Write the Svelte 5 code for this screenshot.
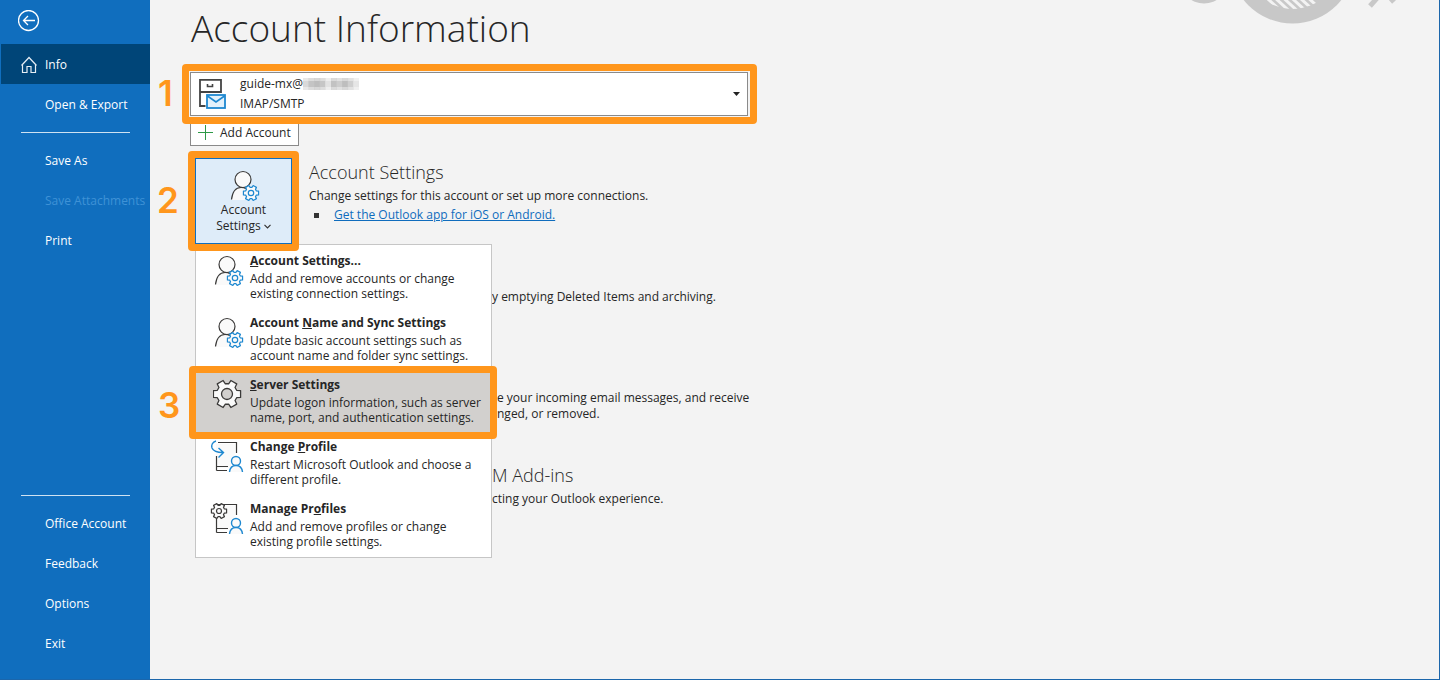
<script lang="ts">
  const topNav = [{ label: 'Save As' }, { label: 'Save Attachments', disabled: true }, { label: 'Print' }];
  const bottomNav = ['Office Account', 'Feedback', 'Options', 'Exit'];
  const menu = [
    { icon: 'user', pre: '', key: 'A', post: 'ccount Settings...', lines: ['Add and remove accounts or change', 'existing connection settings.'] },
    { icon: 'user', pre: 'Account ', key: 'N', post: 'ame and Sync Settings', lines: ['Update basic account settings such as', 'account name and folder sync settings.'] },
    { icon: 'gear', pre: '', key: 'S', post: 'erver Settings', lines: ['Update logon information, such as server', 'name, port, and authentication settings.'], step: 3 },
    { icon: 'change', pre: 'Change ', key: 'P', post: 'rofile', lines: ['Restart Microsoft Outlook and choose a', 'different profile.'] },
    { icon: 'manage', pre: 'Manage Pr', key: 'o', post: 'files', lines: ['Add and remove profiles or change', 'existing profile settings.'] }
  ];
  const mosaic = ['#d9d9d9', '#c4c4c4', '#bdbdbd', '#c6c6c6', '#e2e2e2', '#c2c2c2', '#cdcdcd', '#bebebe', '#cfcfcf', '#e6e6e6'];

  // Outline of a six-toothed cog centred on (cx, cy) with outer radius r.
  function cog(cx: number, cy: number, r: number): string {
    const pts: string[] = [];
    const root = r * 0.74;
    for (let i = 0; i < 6; i++) {
      const a = i * 60;
      for (const [da, rad] of [[-21, root], [-14, r], [14, r], [21, root]]) {
        const t = ((a + da) * Math.PI) / 180;
        pts.push(`${(cx + rad * Math.cos(t)).toFixed(2)},${(cy + rad * Math.sin(t)).toFixed(2)}`);
      }
    }
    return pts.join(' ');
  }
</script>

{#snippet userGear()}
  <svg width="32" height="32" viewBox="0 0 32 32" fill="none" aria-hidden="true">
    <path d="M3 30C4 20 8 17 13 17c4 0 6 1 7 3v10z" fill="#fafafa" />
    <circle cx="14" cy="9.500" r="8" fill="#fafafa" stroke="#3b3a39" stroke-width="1.200" />
    <path d="M2.500 29.500C3.500 21 7.500 17.500 12 17.500c2 0 3.500 .3 5 1.200" stroke="#3b3a39" stroke-width="1.200" />
    <polygon points={cog(22, 23, 7.8)} fill="#fafafa" stroke="#1e88d0" stroke-width="1.200" stroke-linejoin="round" />
    <circle cx="22" cy="23" r="2.700" stroke="#1e88d0" stroke-width="1.200" />
  </svg>
{/snippet}

{#snippet profileBook()}
  <path d="M6 5H25V17l-5 12H6z" fill="#fafafa" />
  <path d="M8 3.500H26.500V14M6.500 17V30.500M6.500 27.500H18M6.500 31.500H17M6.500 27v4.500" stroke="#3b3a39" stroke-width="1.200" />
  <circle cx="26" cy="22" r="4.500" fill="#fafafa" stroke="#1e88d0" stroke-width="1.400" />
  <path d="M19.500 33C20 28.500 22.500 26.500 26 26.500s6 2 6.500 6.500" fill="#fafafa" stroke="#1e88d0" stroke-width="1.400" />
{/snippet}

<div class="app">
  <nav class="side" aria-label="File">
    <button class="back" aria-label="Back">
      <svg width="22" height="22" viewBox="0 0 22 22" fill="none" stroke="#fff" stroke-width="1.300" aria-hidden="true">
        <circle cx="10.500" cy="10.500" r="10" />
        <path d="M17 10.500H5.500M10 6L5.500 10.500l4.500 4.500" />
      </svg>
    </button>
    <a class="item active" href="#info" aria-current="page">
      <svg width="18" height="18" viewBox="0 0 18 18" fill="none" stroke="#e6eef5" stroke-width="1.200" aria-hidden="true">
        <path d="M1.500 9.500L9 1.500l7.500 8M2.500 8.500v8h4.500V10.500h4v6h4.500v-8" />
      </svg>
      Info
    </a>
    <a class="item" href="#open">Open &amp; Export</a>
    <hr />
    {#each topNav as n}
      <button class="item" disabled={n.disabled}>{n.label}</button>
    {/each}
    <div class="bottom">
      <hr />
      {#each bottomNav as n}
        <button class="item">{n}</button>
      {/each}
    </div>
  </nav>

  <main>
    <svg class="art" width="216" height="26" viewBox="0 0 216 26" aria-hidden="true">
      <defs>
        <clipPath id="disc"><circle cx="108.500" cy="-39" r="48" /></clipPath>
      </defs>
      <g fill="#c8c8c8">
        <circle cx="20" cy="-20.500" r="24" />
        <circle cx="108.500" cy="-39" r="62.500" />
      </g>
      <g clip-path="url(#disc)" stroke="#f3f3f3" stroke-width="3">
        {#each [0, 1, 2, 3, 4, 5, 6] as i}
          <line x1={68 + i * 8.3} y1="-8" x2={92 + i * 8.3} y2="14" />
        {/each}
      </g>
      <path d="M186 6l9-10M210 2l-8-9" stroke="#c8c8c8" stroke-width="5" />
    </svg>

    <h1>Account Information</h1>

    <div class="account">
      <label for="acct" class="who">
        guide-mx@<svg width="56" height="12" viewBox="0 0 56 12" aria-hidden="true">
          {#each mosaic as c, i}
            <rect x={i * 5.6} y="0" width="6" height="12" fill={c} opacity="0.600" />
            <rect x={i * 5.6} y="3" width="6" height="6" fill={c} />
          {/each}
        </svg>
      </label>
      <select id="acct"><option>IMAP/SMTP</option></select>
      <svg class="cabinet" width="30" height="32" viewBox="0 0 30 32" fill="none" aria-hidden="true">
        <path d="M2 1.800H23V14H2zM2 14V28H7.500" stroke="#444" stroke-width="1.800" />
        <path d="M9.500 6v2.500h5V6" stroke="#444" stroke-width="1.600" />
        <rect x="9" y="17" width="18" height="13" fill="#e3f1fb" stroke="#1e88d0" stroke-width="1.800" />
        <path d="M9.500 18L18 24l8.500-6" stroke="#1e88d0" stroke-width="1.600" />
      </svg>
      <svg class="arrow" width="7" height="4" viewBox="0 0 7 4" aria-hidden="true"><path d="M0 0h7L3.500 4z" fill="#222" /></svg>
      <span class="frame"></span>
      <span class="num">1</span>
    </div>

    <button class="add">
      <svg width="15" height="15" viewBox="0 0 15 15" stroke="#2e9a47" aria-hidden="true"><path d="M7.500 0v15M0 7.500h15" /></svg>
      Add Account
    </button>

    <div class="body">
      <div class="picker">
        <button class="tile" aria-haspopup="menu" aria-expanded="true">
          {@render userGear()}
          <span>Account</span>
          <span>Settings <svg width="7" height="5" viewBox="0 0 7 5" fill="none" stroke="#333" stroke-width="1.200" aria-hidden="true"><path d="M.5 .8l3 3 3-3" /></svg></span>
        </button>
        <div class="menu" role="menu">
          {#each menu as m}
            <button class="entry" class:hot={m.step} role="menuitem">
              <span class="icon">
                {#if m.icon === 'user'}
                  {@render userGear()}
                {:else if m.icon === 'gear'}
                  <svg width="32" height="32" viewBox="0 0 32 32" fill="none" stroke="#3b3a39" stroke-width="1.300" aria-hidden="true">
                    <polygon points={cog(14, 15, 14)} fill="#fafafa" stroke-linejoin="round" />
                    <circle cx="14" cy="15" r="5.500" fill="#d2d0ce" />
                  </svg>
                {:else}
                  <svg class="wide" width="36" height="36" viewBox="0 0 36 36" fill="none" aria-hidden="true">
                    {@render profileBook()}
                    {#if m.icon === 'change'}
                      <path d="M6 2C2.500 3 1 6 2 9c1 2.500 4 4.500 11 4.500M8.500 9l5 4.500-5 5" stroke="#1e88d0" stroke-width="1.400" />
                    {:else}
                      <polygon points={cog(9, 10, 7.8)} fill="#fafafa" stroke="#3b3a39" stroke-width="1.200" stroke-linejoin="round" />
                      <circle cx="9" cy="10" r="2.500" stroke="#3b3a39" stroke-width="1.200" />
                    {/if}
                  </svg>
                {/if}
              </span>
              <span class="copy">
                <strong>{m.pre}<u>{m.key}</u>{m.post}</strong>
                {#each m.lines as l}<span>{l}</span>{/each}
              </span>
              {#if m.step}
                <span class="frame"></span>
                <span class="num">{m.step}</span>
              {/if}
            </button>
          {/each}
        </div>
        <span class="frame"></span>
        <span class="num">2</span>
      </div>

      <div class="sections">
        <section class="first">
          <h2>Account Settings</h2>
          <p>Change settings for this account or set up more connections.</p>
          <ul><li><a href="#app">Get the Outlook app for iOS or Android.</a></li></ul>
        </section>
        <section class="mailbox"><p>y emptying Deleted Items and archiving.</p></section>
        <section class="rules">
          <p>e your incoming email messages, and receive</p>
          <p>nged, or removed.</p>
        </section>
        <section class="addins">
          <h2>M Add-ins</h2>
          <p>cting your Outlook experience.</p>
        </section>
      </div>
    </div>
  </main>
</div>

<style>
  :global(body) { margin: 0; }
  .app {
    display: grid;
    grid-template-columns: 150px 1fr;
    min-height: 100vh;
    box-sizing: border-box;
    border-right: 1px solid #1b66ab;
    border-bottom: 1px solid #1b66ab;
    background: #f3f3f3;
    color: #262626;
    font: 12px/16px "Open Sans", "Noto Sans", sans-serif;
  }
  button { font: inherit; color: inherit; border: 0; border-radius: 0; background: none; padding: 0; text-align: left; }
  h1, h2, p, ul { margin: 0; padding: 0; }

  .side { display: flex; flex-direction: column; background: #106ebe; color: #fff; }
  .back { height: 44px; padding: 0 0 3px 18px; display: flex; align-items: center; }
  .item {
    display: flex;
    align-items: center;
    width: 100%;
    height: 40px;
    padding: 2px 0 0 45px;
    box-sizing: border-box;
    color: #fff;
    text-decoration: none;
    white-space: nowrap;
  }
  .item:disabled { color: #3f92d6; }
  .active { background: #004578; margin-left: 1px; width: auto; padding-left: 19px; gap: 7px; }
  hr { border: 0; height: 1px; margin: 8px 20px 7px 21px; background: #cfe2f2; }
  .bottom { margin-top: auto; padding-bottom: 16px; }

  main { position: relative; padding: 0 40px; }
  .art { position: absolute; top: 0; right: 39px; }
  h1 { font-size: 37px; line-height: 56px; font-weight: 300; margin: 0 0 16px 1px; }

  .account {
    position: relative;
    display: grid;
    max-width: 558px;
    height: 44px;
  }
  .account > * { grid-area: 1 / 1; }
  .who { z-index: 1; padding: 4px 0 0 50px; pointer-events: none; }
  .who svg { vertical-align: -2px; }
  select {
    appearance: none;
    font: inherit;
    color: inherit;
    background: #fff;
    border: 1px solid #8a8a8a;
    border-radius: 0;
    padding: 20px 0 0 49px;
    height: 44px;
  }
  .cabinet, .arrow { z-index: 1; align-self: center; pointer-events: none; }
  .cabinet { margin-left: 8px; }
  .arrow { justify-self: end; margin-right: 8px; }

  .frame {
    position: absolute;
    inset: -7px;
    border: 7px solid #ff961c;
    border-radius: 4px;
    pointer-events: none;
    z-index: 3;
  }
  .account .frame { inset: -8px -9px -8px -8px; }
  .num {
    position: absolute;
    z-index: 3;
    left: -38px;
    top: 50%;
    font: 600 35px/40px Inter, "Liberation Sans", sans-serif;
    margin-top: -21px;
    color: #ff961c;
  }
  .account .num { left: -32px; }

  .add {
    display: flex;
    align-items: center;
    gap: 7px;
    height: 27px;
    margin-top: 3px;
    padding: 0 7px;
    background: #fff;
    border: 1px solid #8a8a8a;
  }

  .body { display: flex; gap: 17px; margin-top: 12px; padding-left: 5px; }
  .picker { position: relative; flex: none; width: 97px; height: 86px; }
  .tile {
    width: 100%;
    height: 100%;
    display: flex;
    flex-direction: column;
    align-items: center;
    justify-content: flex-end;
    padding-bottom: 9px;
    background: #deecf9;
    border: 1px solid #106ebe;
  }
  .tile > svg { margin-left: 2px; }
  .tile span svg { vertical-align: 1px; }

  .menu {
    position: absolute;
    top: 100%;
    left: 0;
    width: 295px;
    padding: 1px 0;
    background: #fff;
    border: 1px solid #c6c6c6;
    z-index: 2;
  }
  .entry { position: relative; display: flex; width: 100%; height: 62px; padding-left: 17px; line-height: 15px; }
  .hot { background: #d2d0ce; }
  .icon { width: 37px; padding-top: 9px; box-sizing: border-box; }
  .wide { margin-left: -3px; margin-top: -2px; }
  .copy { display: flex; flex-direction: column; padding-top: 7px; white-space: nowrap; }
  .copy strong { line-height: 16px; margin-bottom: 2px; }
  .entry .frame { inset: -4px -6px -7px -7px; }
  .entry .num { margin-top: -16px; }

  h2 { font-size: 18px; line-height: 26px; font-weight: 300; }
  .sections { display: flex; flex-direction: column; }
  .first { padding-top: 1px; }
  .first p { margin-top: 3px; }
  ul { list-style: none; margin-top: 3px; }
  li { display: flex; align-items: center; gap: 15px; padding-left: 5px; }
  li::before { content: ""; width: 5px; height: 5px; background: #333; }
  a { color: #0f6cbd; }
  .mailbox, .rules, .addins { padding-left: 183px; }
  .mailbox { margin-top: 66px; }
  .rules { margin-top: 85px; padding-left: 188px; }
  .addins { margin-top: 40px; }
  .addins p { margin-top: 3px; }
</style>
